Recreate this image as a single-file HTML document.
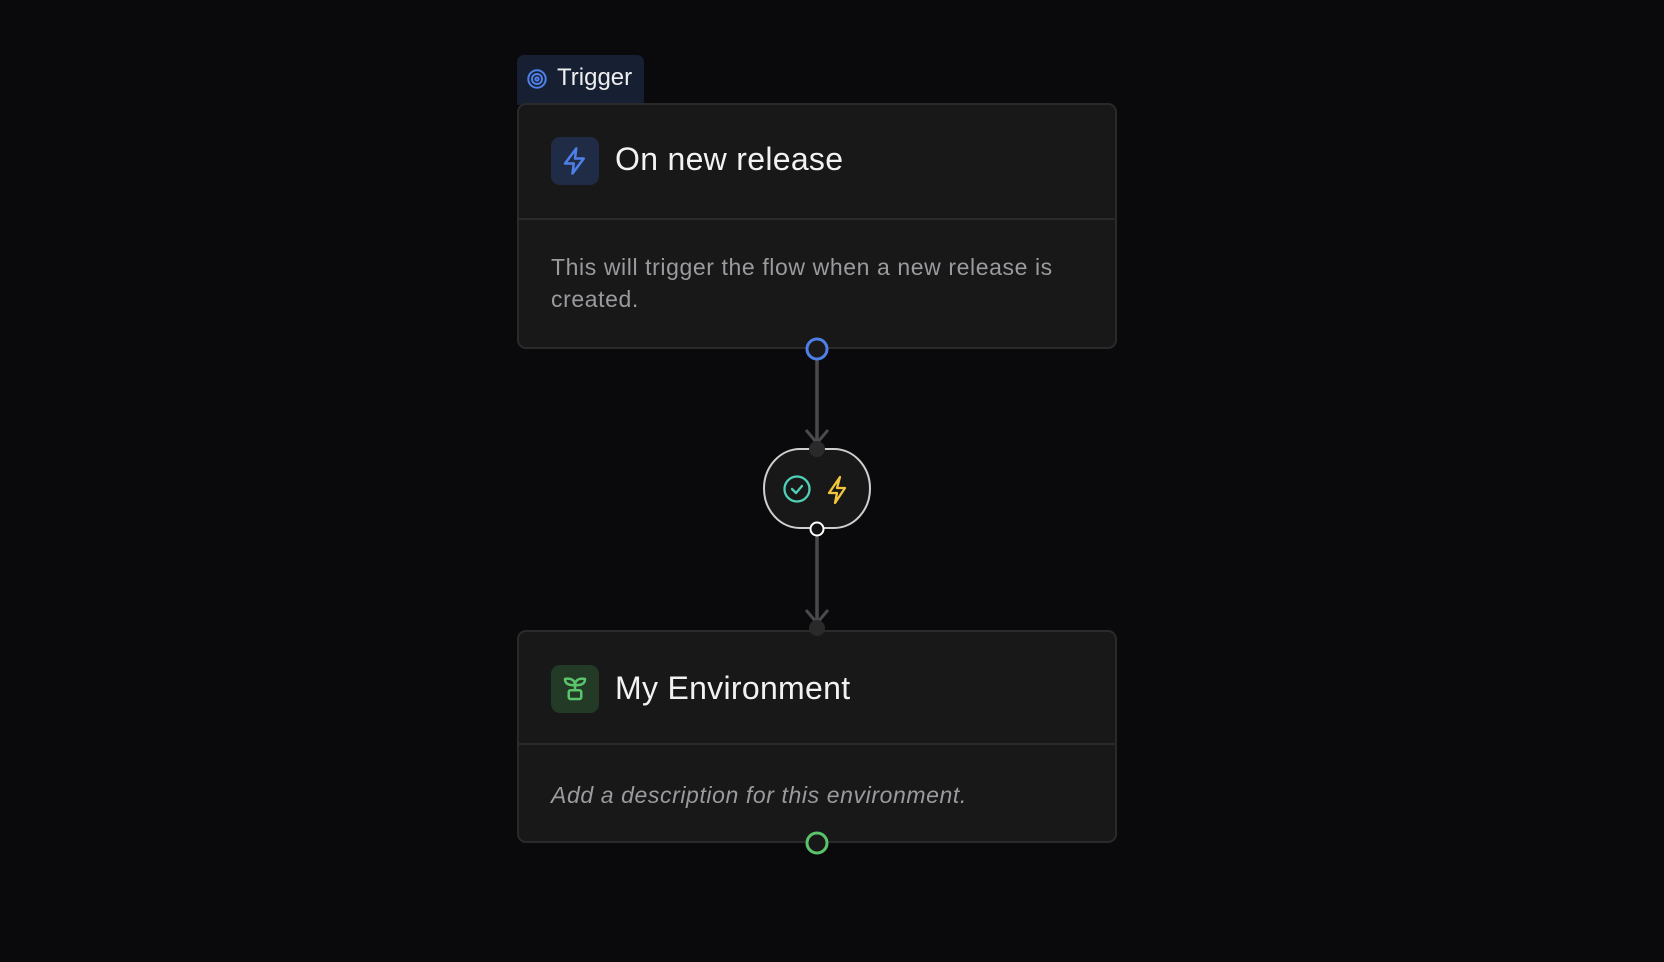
<!DOCTYPE html>
<html><head><style>
body{margin:0;width:1664px;height:962px;background:#0a0a0c;font-family:"Liberation Sans",sans-serif;position:relative;overflow:hidden}
.abs{position:absolute}
.card{position:absolute;left:517px;width:600px;background:#181818;border:2px solid #2a2a2a;border-radius:9px;box-sizing:border-box}
.div{position:absolute;left:0;right:0;height:2px;background:#2a2a2a}
.ib{position:absolute;left:32px;width:48px;height:48px;border-radius:9px}
.title{position:absolute;left:96px;font-size:32px;color:#f2f2f2;letter-spacing:0.3px}
.desc{position:absolute;left:32px;font-size:23px;color:#9a9a9f;line-height:32px;letter-spacing:0.6px}
</style></head><body>
<div class="abs" style="left:517px;top:55px;width:127px;height:50px;background:#172033;border-radius:7px 7px 0 0"></div>
<svg class="abs" style="left:526px;top:68px" width="22" height="22" viewBox="0 0 24 24" fill="none" stroke="#4f7fe8" stroke-width="2.2"><circle cx="12" cy="12" r="9.5"/><circle cx="12" cy="12" r="5.5"/><circle cx="12" cy="12" r="1.8"/></svg>
<div class="abs" style="left:557px;top:64px;font-size:24px;color:#eee">Trigger</div>

<div class="card" style="top:103px;height:246px">
 <div class="ib" style="top:32px;background:#202c45"><svg style="position:absolute;left:9px;top:9px" width="30" height="30" viewBox="0 0 24 24" fill="none" stroke="#4f7fe8" stroke-width="2" stroke-linejoin="round"><path d="M13 2 4 14h7l-1 8 9-12h-7z"/></svg></div>
 <div class="title" style="top:36px">On new release</div>
 <div class="div" style="top:113px"></div>
 <div class="desc" style="top:146px;width:550px">This will trigger the flow when a new release is created.</div>
</div>

<svg class="abs" style="left:0;top:0" width="1664" height="962">
 <line x1="817" y1="355" x2="817" y2="446" stroke="#4a4a4a" stroke-width="3.5"/>
 <path d="M806 430 817 443 828 430" fill="none" stroke="#4a4a4a" stroke-width="3"/>
 <line x1="817" y1="533" x2="817" y2="625" stroke="#4a4a4a" stroke-width="3.5"/>
 <path d="M806 610 817 623 828 610" fill="none" stroke="#4a4a4a" stroke-width="3"/>
 <path d="M800 449 H834 A36 39.5 0 0 1 834 528 H800 A36 39.5 0 0 1 800 449 Z" fill="#181818" stroke="#cfcfcf" stroke-width="2"/>
 <circle cx="817" cy="449" r="8" fill="#2a2a2a"/>
 <circle cx="797" cy="489" r="12.5" fill="none" stroke="#4fd1b8" stroke-width="2.3"/>
 <path d="M792 489l4 4 6-7" fill="none" stroke="#4fd1b8" stroke-width="2.3" stroke-linecap="round" stroke-linejoin="round"/>
 <path d="M840 477 829 493h8l-2 10 10-15h-8z" fill="none" stroke="#f2c53d" stroke-width="2.3" stroke-linejoin="round"/>
 <circle cx="817" cy="529" r="6.5" fill="#111" stroke="#fff" stroke-width="2"/>
 <circle cx="817" cy="349" r="10" fill="#1a1a1a" stroke="#4f7fe8" stroke-width="3"/>
</svg>

<div class="card" style="top:630px;height:213px">
 <div class="ib" style="top:33px;background:#233a27"><svg style="position:absolute;left:9px;top:9px" width="30" height="30" viewBox="0 0 24 24" fill="none" stroke="#5ac46a" stroke-width="2" stroke-linejoin="round" stroke-linecap="round"><path d="M12 13V9M12 9C12 5 9 3 4 4c0 4 3 5 8 5zM12 9c0-4 3-6 8-5 0 4-3 5-8 5z"/><rect x="7" y="13" width="10" height="7" rx="1.5"/></svg></div>
 <div class="title" style="top:38px">My Environment</div>
 <div class="div" style="top:111px"></div>
 <div class="desc" style="top:147px;font-style:italic">Add a description for this environment.</div>
</div>
<svg class="abs" style="left:0;top:0" width="1664" height="962">
 <circle cx="817" cy="628" r="8" fill="#2a2a2a"/>
 <circle cx="817" cy="843" r="10" fill="#181818" stroke="#5ac46a" stroke-width="3"/>
</svg>
</body></html>
